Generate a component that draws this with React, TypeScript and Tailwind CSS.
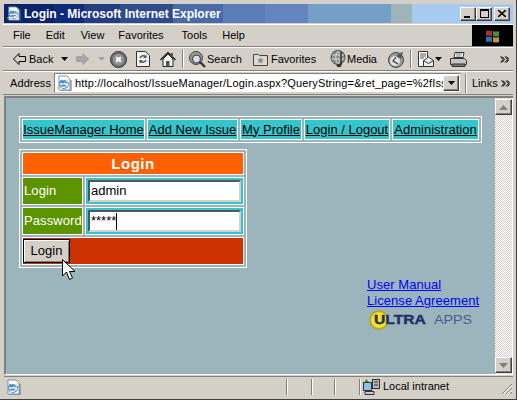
import React from "react";

const Caret = ({ c = "#000" }: { c?: string }) => (
  <svg width="7" height="4" viewBox="0 0 7 4" className="shrink-0"><path d="M0 0h7L3.5 4z" fill={c} /></svg>
);

const Chevrons = () => (
  <svg width="9" height="7" viewBox="0 0 9 7" className="shrink-0">
    <path d="M0.5 0.5L3 3.5L0.5 6.5M2 0.5L4.5 3.5L2 6.5M5 0.5L7.5 3.5L5 6.5M6.5 0.5L9 3.5L6.5 6.5" fill="none" stroke="#000" />
  </svg>
);

const IEPage = ({ s = 16 }: { s?: number }) => (
  <svg width={s} height={s} viewBox="0 0 16 16" className="shrink-0">
    <path d="M3 1h8l3 3v11H3z" fill="#fff" stroke="#7f8fa8" />
    <path d="M15 5v11H5" fill="none" stroke="#66708a" />
    <circle cx="8" cy="9" r="5" fill="#3f8fe0" />
    <path d="M4 9h8M5 12c3 1 6 0 7-3M6 5c2-1 5-1 6 2" fill="none" stroke="#fff" strokeWidth="1.3" />
    <path d="M1 13C4 12 12 5 14 3" fill="none" stroke="#e8c040" strokeWidth="1" />
  </svg>
);

const Back = () => (
  <svg width="13" height="12" viewBox="0 0 13 12" className="shrink-0">
    <path d="M0.5 6L6 0.5V3.5H12.5V8.5H6V11.5z" fill="#d4d0c8" stroke="#000" />
  </svg>
);
const Forward = () => (
  <svg width="13" height="12" viewBox="0 0 13 12" className="shrink-0">
    <path d="M12.5 6L7 0.5V3.5H0.5V8.5H7V11.5z" fill="#a6a6a6" stroke="#a0a0a0" />
  </svg>
);
const Stop = () => (
  <svg width="17" height="17" viewBox="0 0 17 17" className="shrink-0">
    <circle cx="8.5" cy="8.5" r="8" fill="#707074" stroke="#333" />
    <circle cx="8.5" cy="8.5" r="5.5" fill="#94949a" />
    <path d="M6.2 6.2l4.6 4.6M10.8 6.2l-4.6 4.6" stroke="#fff" strokeWidth="2" />
  </svg>
);
const Refresh = () => (
  <svg width="14" height="16" viewBox="0 0 14 16" className="shrink-0">
    <path d="M0.5 0.5h9l4 4v11H0.5z" fill="#f2f2f2" stroke="#333" />
    <path d="M4 7a3.5 3.5 0 0 1 6-1M10 9a3.5 3.5 0 0 1-6 1" fill="none" stroke="#555" strokeWidth="1.5" />
    <path d="M10.5 3.5v3.5H7M3.5 12.5V9H7" fill="#555" />
  </svg>
);
const Home = () => (
  <svg width="16" height="15" viewBox="0 0 16 15" className="shrink-0">
    <path d="M3 7v7.5h10V7L8 2z" fill="#f4f4f4" stroke="#222" />
    <path d="M0.5 8L8 0.5L15.5 8" fill="none" stroke="#222" strokeWidth="1.4" />
    <rect x="6" y="9" width="3.5" height="5.5" fill="#555" />
    <rect x="11" y="1" width="2" height="4" fill="#555" />
  </svg>
);
const SearchI = () => (
  <svg width="17" height="17" viewBox="0 0 17 17" className="shrink-0">
    <circle cx="7" cy="7" r="6.5" fill="#999" stroke="#444" />
    <circle cx="7.5" cy="8" r="4" fill="#dde" stroke="#333" />
    <path d="M11 11l5 5" stroke="#333" strokeWidth="2.4" />
  </svg>
);
const Fav = () => (
  <svg width="15" height="14" viewBox="0 0 15 14" className="shrink-0">
    <path d="M0.5 2.5h5l1 1h8v10h-14z" fill="#dcdad2" stroke="#444" />
    <path d="M7.5 5l1 2.3 2.5.2-1.9 1.6.6 2.4-2.2-1.3-2.2 1.3.6-2.4L4 7.5l2.5-.2z" fill="#8a8a8a" />
  </svg>
);
const Media = () => (
  <svg width="17" height="18" viewBox="0 0 17 18" className="shrink-0">
    <circle cx="8" cy="7.5" r="7" fill="#8d8d8d" stroke="#444" />
    <path d="M2 5h12M1.5 9h13M8 1c-3 3-3 10 0 13M8 1c3 3 3 10 0 13" fill="none" stroke="#d8d8d8" />
    <path d="M11 2v13" stroke="#222" strokeWidth="1.3" />
    <ellipse cx="9" cy="15.5" rx="2.5" ry="1.7" fill="#333" />
  </svg>
);
const History = () => (
  <svg width="17" height="17" viewBox="0 0 17 17" className="shrink-0">
    <circle cx="8" cy="9" r="7.5" fill="#9a9a9a" stroke="#444" />
    <circle cx="7" cy="10" r="5" fill="#e2e2e2" />
    <path d="M8 6L5 10l5 3" stroke="#333" strokeWidth="1.2" fill="none" />
    <path d="M8 5L15 0.5L13 8z" fill="#555" />
  </svg>
);
const Mail = () => (
  <svg width="16" height="17" viewBox="0 0 16 17" className="shrink-0">
    <path d="M0.5 0.5h9v15h-9z" fill="#fff" stroke="#333" />
    <path d="M2 3h6M2 5h6M2 7h4" stroke="#555" />
    <path d="M5.5 9.5L10.5 6l5 3.5v6h-10z" fill="#ececec" stroke="#333" />
    <path d="M5.5 9.5l5 3 5-3" fill="none" stroke="#333" />
  </svg>
);
const Printer = () => (
  <svg width="17" height="15" viewBox="0 0 17 15" className="shrink-0">
    <path d="M5 0.5h9l-1 5H4z" fill="#fff" stroke="#333" />
    <path d="M0.5 6.5h14l2 2v4h-16z" fill="#c4c4c4" stroke="#333" />
    <path d="M2 12h13v2.5H2z" fill="#777" stroke="#333" />
    <path d="M6 2h6M6 4h5" stroke="#777" />
  </svg>
);
const WinLogo = () => (
  <svg width="16" height="14" viewBox="0 0 16 14" className="shrink-0">
    <path d="M1 2q3-1 6 0v5q-3-1-6 0z" fill="#a8352b" />
    <path d="M8 2q3 1 6 0v5q-3 1-6 0z" fill="#4d8a3f" />
    <path d="M1 8q3-1 6 0v5q-3-1-6 0z" fill="#3d6db0" />
    <path d="M8 8q3 1 6 0v5q-3 1-6 0z" fill="#c29636" />
  </svg>
);
const Intranet = () => (
  <svg width="17" height="16" viewBox="0 0 17 16" className="shrink-0">
    <rect x="0.5" y="3.5" width="8" height="8" fill="#8fc0e8" stroke="#333" />
    <rect x="9.5" y="0.5" width="7" height="9" fill="#bbb" stroke="#333" />
    <path d="M11 3h4M11 6h4" stroke="#333" />
    <path d="M2 12.5h9v3H2z" fill="#ccc" stroke="#333" />
    <path d="M3 0l3 3H2z" fill="#3a8a2a" />
  </svg>
);

const Raised = ({ children, className = "" }: { children?: React.ReactNode; className?: string }) => (
  <div className={`flex items-center justify-center bg-[#d4d0c8] border border-t-white border-l-white border-r-[#404040] border-b-[#404040] shadow-[inset_-1px_-1px_0_#808080] ${className}`}>
    {children}
  </div>
);

const navItems = [
  { t: "IssueManager Home", w: "w-[123px]" },
  { t: "Add New Issue", w: "w-[91px]" },
  { t: "My Profile", w: "w-[62px]" },
  { t: "Login / Logout", w: "w-[86px]" },
  { t: "Administration", w: "w-[87px]" },
];

export default function App() {
  return (
    <div className="w-[517px] h-[400px] overflow-hidden flex flex-col bg-[#d4d0c8] p-[3px] pr-[3px] font-['Liberation_Sans',sans-serif] text-[11px] text-black border-r border-b border-r-[#404040] border-b-[#404040]">
      {/* Title bar */}
      <div className="h-[19px] mt-[1px] ml-[1px] flex items-center shrink-0 pl-[2px] pr-[3px] bg-[linear-gradient(90deg,#0a246a_0_50px,#0e2a78_50px_80px,#233d80_80px_116px,#2f4b8c_116px_169px,#4a69a6_169px_219px,#5b7db8_219px_261px,#6384bd_261px_304px,#749fc9_304px_387px,#9db5b9_387px_408px,#a6caf0_408px_100%)]">
        <IEPage s={15} />
        <span className="ml-[3px] text-white font-bold text-[12px] flex-1">Login - Microsoft Internet Explorer</span>
        <div className="flex">
          <Raised className="w-[16px] h-[14px] items-end justify-start pl-[3px] pb-[2px]"><span className="block w-[6px] h-[2px] bg-black" /></Raised>
          <Raised className="w-[16px] h-[14px]"><span className="block w-[9px] h-[9px] border border-black border-t-2" /></Raised>
          <Raised className="w-[16px] h-[14px] ml-[2px]">
            <svg width="8" height="7" viewBox="0 0 8 7"><path d="M0 0l8 7M8 0L0 7" stroke="#000" strokeWidth="1.6" /></svg>
          </Raised>
        </div>
      </div>

      {/* Menu */}
      <div className="h-[23px] shrink-0 flex border-t border-b border-t-white border-b-[#808080] mt-[1px]">
        <div className="flex-1 flex items-center text-[11px]">
          <span className="ml-[10px]">File</span>
          <span className="ml-[15px]">Edit</span>
          <span className="ml-[16px]">View</span>
          <span className="ml-[14px]">Favorites</span>
          <span className="ml-[18px]">Tools</span>
          <span className="ml-[15px]">Help</span>
        </div>
        <div className="w-[41px] bg-black flex items-center justify-center"><WinLogo /></div>
      </div>

      {/* Toolbar */}
      <div className="h-[24px] shrink-0 flex items-center border-t border-b border-t-white border-b-[#808080] text-[11px]">
        <span className="ml-[10px]"><Back /></span>
        <span className="ml-[3px] w-[32px]">Back</span>
        <Caret />
        <span className="ml-[8px]"><Forward /></span>
        <span className="ml-[9px]"><Caret c="#a0a0a0" /></span>
        <span className="ml-[5px]"><Stop /></span>
        <span className="ml-[9px]"><Refresh /></span>
        <span className="ml-[10px]"><Home /></span>
        <span className="ml-[6px] w-[1px] h-[18px] bg-[#808080] shadow-[1px_0_0_#fff]" />
        <span className="ml-[6px]"><SearchI /></span>
        <span className="ml-[1px] w-[46px]">Search</span>
        <Fav />
        <span className="ml-[3px] w-[59px]">Favorites</span>
        <Media />
        <span className="ml-[0px] w-[41px]">Media</span>
        <History />
        <span className="ml-[5px] w-[1px] h-[18px] bg-[#808080] shadow-[1px_0_0_#fff]" />
        <span className="ml-[7px]"><Mail /></span>
        <span className="ml-[1px]"><Caret /></span>
        <span className="ml-[8px]"><Printer /></span>
        <span className="ml-auto mr-[4px]"><Chevrons /></span>
      </div>

      {/* Address */}
      <div className="h-[24px] shrink-0 flex items-center border-t border-b border-t-white border-b-[#808080] text-[11px]">
        <span className="ml-[7px] w-[44px] tracking-[0.1px]">Address</span>
        <div className="w-[407px] h-[20px] bg-white border border-[#808080] border-b-[#d4d0c8] border-r-[#d4d0c8] flex items-center pl-[1px]">
          <IEPage s={16} />
          <span className="ml-[3px] flex-1 min-w-0 overflow-hidden whitespace-nowrap tracking-[0.15px]">http://localhost/IssueManager/Login.aspx?QueryString=&amp;ret_page=%2fIssu</span>
          <Raised className="w-[16px] h-[16px] shrink-0"><Caret /></Raised>
          <span className="w-[1px]" />
        </div>
        <span className="ml-[4px] w-[1px] h-[19px] bg-[#808080] shadow-[1px_0_0_#fff]" />
        <span className="ml-[6px] w-[26px]">Links</span>
        <span className="ml-[3px]"><Chevrons /></span>
      </div>

      {/* Viewport */}
      <div className="flex-1 min-h-0 flex mt-[1px] ml-[1px] border-l-2 border-t-2 border-l-[#808080] border-t-[#808080] border-b border-b-white">
        <div className="relative flex-1 min-w-0 bg-[#9cb4bb] pl-[13px] pt-[18px] text-[13px] leading-[16px]">
          <div className="w-fit flex gap-[2px] p-[2px] border border-white">
            {navItems.map(({ t, w }) => (
              <div key={t} className={`h-[21px] flex items-center justify-center bg-[#33c6cc] border border-white underline whitespace-nowrap ${w}`}>{t}</div>
            ))}
          </div>

          <div className="mt-[6px] w-[228px] border border-white p-[2px] flex flex-col gap-[2px]">
            <div className="h-[23px] bg-[#ff6000] border border-white text-white font-bold text-[15px] tracking-[0.5px] flex items-center justify-center">Login</div>
            {[["Login", "admin"], ["Password", "*****"]].map(([l, v], i) => (
              <div key={l} className="flex gap-[2px] h-[28px]">
                <div className="w-[61px] bg-[#5c9400] border border-white text-white flex items-center pl-[1px] tracking-[0.1px]">{l}</div>
                <div className="flex-1 bg-[#33c6cc] border border-white flex items-center px-[2px]">
                  <div className="w-full h-[22px] bg-white border-2 border-t-[#555] border-l-[#555] border-r-[#d4d0c8] border-b-[#d4d0c8] flex items-center pl-[1px]">
                    {v}
                    {i === 1 && <span className="w-[1px] h-[17px] bg-black" />}
                  </div>
                </div>
              </div>
            ))}
            <div className="h-[28px] bg-[#cc3300] border border-white flex items-center">
              <div className="w-[47px] h-[24px] bg-[#d4d0c8] border border-black shadow-[inset_1px_1px_0_#fff,inset_-1px_-1px_0_#808080] flex items-center justify-center">Login</div>
            </div>
          </div>

          <div className="ml-[348px] mt-[9px] flex flex-col text-[13px] leading-[16px] text-[#0000ff] whitespace-nowrap">
            <span className="underline tracking-[0.05px]">User Manual</span>
            <span className="underline tracking-[0.05px]">License Agreement</span>
            <div className="flex items-center h-[24px] mt-[-1px] text-[#1f3a78]">
              <span className="relative flex items-center h-[20px] ml-[2px]">
                <span className="block w-[20px] h-[20px] rounded-full bg-[#f4e020] border-2 border-[#b0a830]" />
                <span className="absolute left-[5px] top-[2px] origin-left scale-x-[1.2] font-bold text-[13px] text-[#1f2f68] [-webkit-text-stroke:0.4px_#1f2f68]">ULTRA</span>
              </span>
              <span className="ml-[45px] origin-left scale-x-[1.1] text-[13px] text-[#46608e]">APPS</span>
            </div>
          </div>

          <svg width="14" height="22" viewBox="0 0 14 22" className="absolute left-[56px] top-[161px]">
            <path d="M0.5 0.5V17L4.5 13L7.5 20.5L10.5 19L7.5 12.5H13z" fill="#fff" stroke="#000" />
          </svg>
        </div>

        {/* Scrollbar */}
        <div className="w-[17px] shrink-0 flex flex-col bg-[repeating-conic-gradient(#d4d0c8_0_25%,#fff_0_50%)] bg-[length:2px_2px]">
          <Raised className="h-[16px] mt-[1px]">
            <svg width="9" height="5" viewBox="0 0 9 5"><path d="M4.5 0L9 5H0z" fill="#808080" /></svg>
          </Raised>
          <div className="flex-1" />
          <Raised className="h-[16px] mb-[1px]">
            <svg width="9" height="5" viewBox="0 0 9 5"><path d="M0 0h9L4.5 5z" fill="#808080" /></svg>
          </Raised>
        </div>
        <div className="w-[1px] shrink-0 bg-white" />
      </div>

      {/* Status */}
      <div className="h-[20px] shrink-0 flex items-center border-t border-t-[#808080] text-[11px] mt-[1px] ml-[1px]">
        <span className="ml-[1px]"><IEPage s={16} /></span>
        <div className="flex-1" />
        <span className="w-[1px] h-[16px] bg-[#808080] shadow-[1px_0_0_#fff] mr-[24px]" />
        <span className="w-[1px] h-[16px] bg-[#808080] shadow-[1px_0_0_#fff] mr-[22px]" />
        <span className="w-[1px] h-[16px] bg-[#808080] shadow-[1px_0_0_#fff] mr-[24px]" />
        <span className="w-[1px] h-[16px] bg-[#808080] shadow-[1px_0_0_#fff] mr-[3px]" />
        <Intranet />
        <span className="ml-[3px] w-[118px]">Local intranet</span>
        <svg width="12" height="12" viewBox="0 0 12 12" className="self-end mb-[1px]">
          <path d="M11 1L1 11M11 5L5 11M11 9L9 11" stroke="#808080" />
          <path d="M11 2.5L2.5 11M11 6.5L6.5 11" stroke="#fff" />
        </svg>
      </div>
    </div>
  );
}
